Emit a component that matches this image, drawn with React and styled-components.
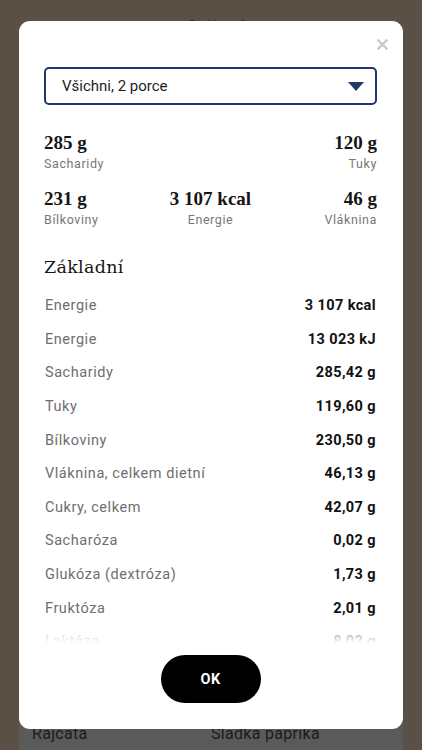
import React from "react";
import styled, { createGlobalStyle } from "styled-components";

const Global = createGlobalStyle`
  html, body { margin: 0; padding: 0; }
  body {
    width: 422px;
    height: 750px;
    overflow: hidden;
    background: #5b5045;
    font-family: Roboto, "Noto Sans", sans-serif;
  }
`;

const Page = styled.div`
  position: relative;
  width: 422px;
  height: 750px;
  overflow: hidden;
  background: #5b5045;
  display: flex;
  flex-direction: column;
  justify-content: space-between;
`;

const BehindTitle = styled.div`
  padding-top: 15px;
  text-align: center;
  font-family: "Liberation Serif", serif;
  font-weight: 700;
  font-size: 22px;
  color: #2f2a24;
  line-height: 26px;
`;

const BehindPanel = styled.div`
  margin: 0 19px;
  height: 40px;
  background: #5a5a5a;
  display: grid;
  grid-template-columns: 1fr 1fr;
  padding: 14px 13px 0;
  align-items: start;
  box-sizing: border-box;
`;

const BehindItem = styled.span`
  font-size: 16px;
  color: #1c1c1c;
  line-height: 20px;
  letter-spacing: 0.3px;
`;

const Modal = styled.div`
  position: absolute;
  top: 21px;
  left: 19px;
  width: 384px;
  height: 708px;
  box-sizing: border-box;
  background: #fff;
  border-radius: 11px;
  padding: 46px 26px 26px 25px;
  display: flex;
  flex-direction: column;
`;

const Close = styled.button`
  position: absolute;
  top: 16px;
  right: 14px;
  width: 14px;
  height: 14px;
  border: 0;
  padding: 0;
  background: none;
  display: flex;
  align-items: center;
  justify-content: center;
`;

const Select = styled.div`
  height: 38px;
  flex-shrink: 0;
  box-sizing: border-box;
  border: 2.5px solid #1f3868;
  border-radius: 5px;
  display: flex;
  align-items: center;
  justify-content: space-between;
  padding: 0 11px 0 16px;
  font-size: 15px;
  color: #1d1d1d;
`;

const Scroll = styled.div`
  position: relative;
  flex: 1;
  min-height: 0;
  overflow: hidden;
  margin-top: 27px;
  &::after {
    content: "";
    position: absolute;
    left: 0;
    right: 0;
    bottom: 0;
    height: 34px;
    background: linear-gradient(rgba(255,255,255,0), #fff 92%);
  }
`;

const Stats = styled.div`
  display: grid;
  grid-template-columns: 1fr 1fr 1fr;
  row-gap: 16px;
`;

const Stat = styled.div`
  display: flex;
  flex-direction: column;
  align-items: ${(p) => p.$align};
  text-align: ${(p) => (p.$align === "flex-end" ? "right" : p.$align === "center" ? "center" : "left")};
`;

const StatValue = styled.span`
  font-family: "Liberation Serif", serif;
  font-weight: 700;
  font-size: 19px;
  line-height: 22px;
  min-height: 22px;
  color: #151515;
`;

const StatLabel = styled.span`
  margin-top: 2px;
  font-size: 12.5px;
  line-height: 16px;
  color: #777;
  letter-spacing: 0.6px;
`;

const Heading = styled.h2`
  margin: 27px 0 10px;
  font-family: "DejaVu Serif", serif;
  font-weight: 400;
  font-size: 17.5px;
  line-height: 24px;
  color: #151515;
  letter-spacing: 0.3px;
`;

const Row = styled.div`
  display: flex;
  justify-content: space-between;
  align-items: center;
  height: 33.6px;
  padding: 0 1px;
`;

const RowLabel = styled.span`
  font-size: 14.5px;
  color: #6e6e6e;
  letter-spacing: 0.55px;
`;

const RowValue = styled.span`
  font-size: 14.5px;
  font-weight: 700;
  color: #111;
  letter-spacing: 0.4px;
`;

const Footer = styled.div`
  display: flex;
  justify-content: center;
  margin-top: 9px;
  flex-shrink: 0;
`;

const OkButton = styled.button`
  width: 100px;
  height: 48px;
  border: 0;
  border-radius: 24px;
  background: #000;
  color: #fff;
  font-family: Roboto, sans-serif;
  font-weight: 700;
  font-size: 14.5px;
  letter-spacing: 0.3px;
`;

const stats = [
  { v: "285 g", l: "Sacharidy", a: "flex-start" },
  { v: "", l: "", a: "center" },
  { v: "120 g", l: "Tuky", a: "flex-end" },
  { v: "231 g", l: "Bílkoviny", a: "flex-start" },
  { v: "3 107 kcal", l: "Energie", a: "center" },
  { v: "46 g", l: "Vláknina", a: "flex-end" },
];

const rows = [
  ["Energie", "3 107 kcal"],
  ["Energie", "13 023 kJ"],
  ["Sacharidy", "285,42 g"],
  ["Tuky", "119,60 g"],
  ["Bílkoviny", "230,50 g"],
  ["Vláknina, celkem dietní", "46,13 g"],
  ["Cukry, celkem", "42,07 g"],
  ["Sacharóza", "0,02 g"],
  ["Glukóza (dextróza)", "1,73 g"],
  ["Fruktóza", "2,01 g"],
  ["Laktóza", "8,02 g"],
  ["Maltóza", "0,00 g"],
];

export default function App() {
  return (
    <>
      <Global />
      <Page>
        <BehindTitle>Složení</BehindTitle>
        <BehindPanel>
          <BehindItem>Rajčata</BehindItem>
          <BehindItem>Sladká paprika</BehindItem>
        </BehindPanel>
        <Modal>
          <Close aria-label="Zavřít">
            <svg width="11" height="11" viewBox="0 0 11 11">
              <path d="M1.5 1.5 L9.5 9.5 M9.5 1.5 L1.5 9.5" stroke="#c9c9c9" strokeWidth="2.4" strokeLinecap="square" />
            </svg>
          </Close>
          <Select>
            <span>Všichni, 2 porce</span>
            <svg width="16" height="9" viewBox="0 0 16 9">
              <path d="M0 0 H16 L8 9 Z" fill="#1f3868" />
            </svg>
          </Select>
          <Scroll>
            <Stats>
              {stats.map((s, i) => (
                <Stat key={i} $align={s.a}>
                  <StatValue>{s.v}</StatValue>
                  <StatLabel>{s.l}</StatLabel>
                </Stat>
              ))}
            </Stats>
            <Heading>Základní</Heading>
            {rows.map(([l, v], i) => (
              <Row key={i}>
                <RowLabel>{l}</RowLabel>
                <RowValue>{v}</RowValue>
              </Row>
            ))}
          </Scroll>
          <Footer>
            <OkButton>OK</OkButton>
          </Footer>
        </Modal>
      </Page>
    </>
  );
}
